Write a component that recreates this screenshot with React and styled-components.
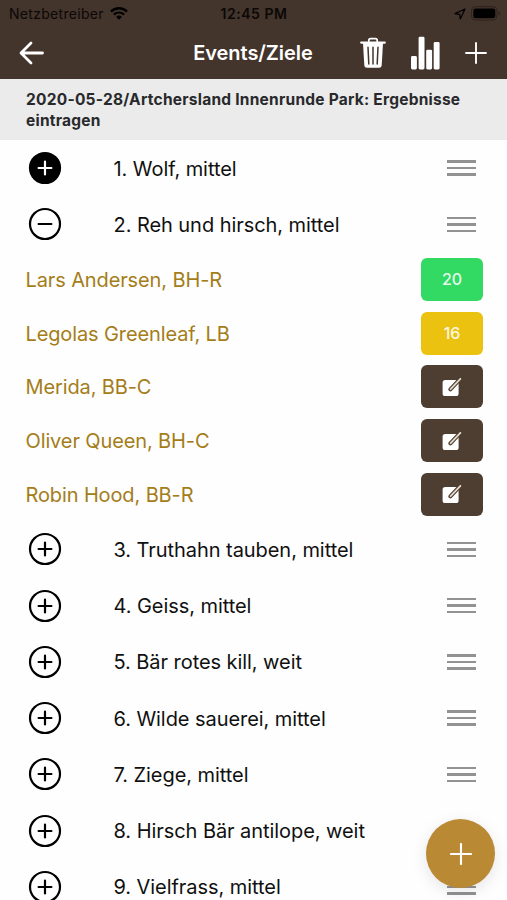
import React from "react";
import styled, { createGlobalStyle } from "styled-components";

const targets = [
  { name: "1. Wolf, mittel", state: "done" },
  { name: "2. Reh und hirsch, mittel", state: "open" },
  { name: "3. Truthahn tauben, mittel" },
  { name: "4. Geiss, mittel" },
  { name: "5. Bär rotes kill, weit" },
  { name: "6. Wilde sauerei, mittel" },
  { name: "7. Ziege, mittel" },
  { name: "8. Hirsch Bär antilope, weit" },
  { name: "9. Vielfrass, mittel" },
];

const archers = [
  { name: "Lars Andersen, BH-R", score: 20, color: "#32da64" },
  { name: "Legolas Greenleaf, LB", score: 16, color: "#ecc210" },
  { name: "Merida, BB-C" },
  { name: "Oliver Queen, BH-C" },
  { name: "Robin Hood, BB-R" },
];

function WifiIcon() {
  return (
    <svg width="18" height="13" viewBox="0 0 18 13" fill="none" stroke="#000">
      <path d="M1 4.6a11.4 11.4 0 0 1 16 0" strokeWidth="2.4" />
      <path d="M3.9 7.6a7.3 7.3 0 0 1 10.2 0" strokeWidth="2.2" />
      <path d="M9 12.7 6.2 9.9a4 4 0 0 1 5.6 0z" fill="#000" stroke="none" />
    </svg>
  );
}

function LocationIcon() {
  return (
    <svg width="12" height="12" viewBox="0 0 12 12" fill="none" stroke="#000" strokeWidth="1.2" strokeLinejoin="round">
      <path d="M11 1 1 5.6l4.7.7.6 4.7z" />
    </svg>
  );
}

function BatteryIcon() {
  return (
    <svg width="30" height="15" viewBox="0 0 30 15">
      <rect x="0.5" y="0.7" width="25.5" height="13.4" rx="4" fill="none" stroke="#2d221c" strokeWidth="1" />
      <rect x="2.3" y="2.5" width="22" height="9.8" rx="2.3" fill="#000" />
      <path d="M27.5 5.3q3 2 0 4.2z" fill="#2d221c" />
    </svg>
  );
}

function BackIcon() {
  return (
    <svg width="26" height="24" viewBox="0 0 26 24" fill="none" stroke="#fff" strokeWidth="2.8" strokeLinecap="round" strokeLinejoin="round">
      <path d="M12 2 2 12l10 10M2.5 12h21" />
    </svg>
  );
}

function TrashIcon() {
  return (
    <svg width="26" height="32" viewBox="0 0 26 32" fill="none">
      <path d="M8.8 5V3.4q0-1.8 1.8-1.8h4.8q1.8 0 1.8 1.8V5" stroke="#fff" strokeWidth="1.7" />
      <path d="M1.2 5.6h23.6" stroke="#fff" strokeWidth="2.2" strokeLinecap="round" />
      <path d="M3 6h20l-1.3 22.2q-.2 2.6-2.7 2.6H7q-2.5 0-2.7-2.6z" fill="#fff" />
      <path d="m8 10.3.8 16.7M13 10.3V27M18 10.3 17.2 27" stroke="#43342c" strokeWidth="1.5" strokeLinecap="round" />
    </svg>
  );
}

function StatsIcon() {
  return (
    <svg width="29" height="34" viewBox="0 0 29 34" fill="#fff">
      <rect x="0" y="20" width="5.9" height="13.5" rx="1.4" />
      <rect x="7.6" y="0.7" width="5.9" height="32.8" rx="1.4" />
      <rect x="15.2" y="13.7" width="5.9" height="19.8" rx="1.4" />
      <rect x="22.7" y="6" width="5.9" height="27.5" rx="1.4" />
    </svg>
  );
}

function PlusIcon({ weight = 1.9 }) {
  return (
    <svg width="22" height="22" viewBox="0 0 22 22" stroke="#fff" strokeWidth={weight} strokeLinecap="round">
      <path d="M11 1v20M1 11h20" />
    </svg>
  );
}

function ToggleIcon({ state }) {
  const done = state === "done";
  return (
    <svg width="34" height="34" viewBox="0 0 34 34" fill="none" strokeWidth="2.2" strokeLinecap="round">
      <circle cx="17" cy="17" r="15" fill={done ? "#000" : "none"} stroke="#000" />
      <path d={state === "open" ? "M10.6 17h12.8" : "M17 10.6v12.8M10.6 17h12.8"} stroke={done ? "#fff" : "#000"} />
    </svg>
  );
}

function EditIcon() {
  return (
    <svg width="20" height="20" viewBox="0 0 20 20" fill="none">
      <rect x="0.6" y="3" width="16" height="16" rx="2.6" fill="#fff" />
      <path d="m8.4 12.4 9.6-10.2" stroke="#4e3d31" strokeWidth="4" strokeLinecap="round" />
      <path d="m8.6 12.2 9.8-10.4" stroke="#e2d8c8" strokeWidth="1.8" strokeLinecap="round" />
    </svg>
  );
}

function TargetRow({ target }) {
  return (
    <Row>
      <Toggle aria-label={target.name}>
        <ToggleIcon state={target.state} />
      </Toggle>
      <TargetName>{target.name}</TargetName>
      <DragHandle>
        <span />
        <span />
        <span />
      </DragHandle>
    </Row>
  );
}

function App() {
  return (
    <Screen>
      <GlobalStyle />
      <Header>
        <StatusBar>
          <Carrier>
            Netzbetreiber <WifiIcon />
          </Carrier>
          <Clock>12:45 PM</Clock>
          <StatusIcons>
            <LocationIcon />
            <BatteryIcon />
          </StatusIcons>
        </StatusBar>
        <Toolbar>
          <BarButton aria-label="Zurück">
            <BackIcon />
          </BarButton>
          <Title>Events/Ziele</Title>
          <Actions>
            <BarButton aria-label="Löschen">
              <TrashIcon />
            </BarButton>
            <BarButton aria-label="Statistik">
              <StatsIcon />
            </BarButton>
            <BarButton aria-label="Neu">
              <PlusIcon />
            </BarButton>
          </Actions>
        </Toolbar>
      </Header>
      <EventInfo>2020-05-28/Artchersland Innenrunde Park: Ergebnisse eintragen</EventInfo>
      <List>
        {targets.map((target) => (
          <React.Fragment key={target.name}>
            <TargetRow target={target} />
            {target.state === "open" &&
              archers.map((archer) => (
                <ArcherRow key={archer.name}>
                  <ArcherName>{archer.name}</ArcherName>
                  <ScoreButton $color={archer.color}>{archer.score || <EditIcon />}</ScoreButton>
                </ArcherRow>
              ))}
          </React.Fragment>
        ))}
      </List>
      <Fab aria-label="Ziel hinzufügen">
        <PlusIcon weight={2.1} />
      </Fab>
    </Screen>
  );
}
export default App;

const GlobalStyle = createGlobalStyle`
  body {
    margin: 0;
    background: #fff;
    font-family: Inter, "Liberation Sans", sans-serif;
  }

  * {
    box-sizing: border-box;
  }

  button {
    padding: 0;
    border: 0;
    background: none;
    font-family: inherit;
  }

  svg {
    display: block;
    flex-shrink: 0;
  }
`;

const Screen = styled.div`
  position: relative;
  display: flex;
  flex-direction: column;
  height: 900px;
  overflow: hidden;
  background: #fefefe;
`;

const Header = styled.header`
  height: 79px;
  flex-shrink: 0;
  background: #43342c;
`;

const StatusBar = styled.div`
  display: grid;
  grid-template-columns: 1fr auto 1fr;
  align-items: center;
  height: 27px;
  padding: 0 6px 0 9px;
  color: #0b0806;
`;

const Carrier = styled.div`
  display: flex;
  align-items: center;
  gap: 6px;
  font-size: 14px;
  letter-spacing: 0.3px;
`;

const Clock = styled.div`
  margin-right: 2px;
  font-size: 14px;
  font-weight: 600;
  letter-spacing: 0.55px;
`;

const StatusIcons = styled.div`
  display: flex;
  align-items: center;
  justify-content: flex-end;
  gap: 5px;
`;

const Toolbar = styled.div`
  display: grid;
  grid-template-columns: 1fr auto 1fr;
  align-items: center;
  height: 51px;
  padding: 0 20px 0 19px;
`;

const BarButton = styled.button`
  display: flex;
  align-items: center;
`;

const Title = styled.h1`
  margin: 0;
  color: #fff;
  font-size: 20px;
  font-weight: 600;
  letter-spacing: -0.05px;
`;

const Actions = styled.div`
  display: flex;
  align-items: center;
  justify-content: flex-end;
  gap: 25px;
`;

const EventInfo = styled.div`
  height: 61px;
  flex-shrink: 0;
  padding: 9.5px 26px;
  background: #ebebeb;
  color: #29292b;
  font-size: 15.5px;
  font-weight: 700;
  letter-spacing: 0.24px;
  line-height: 21px;
`;

const List = styled.main`
  flex-shrink: 0;
`;

const Row = styled.div`
  display: flex;
  align-items: center;
  height: 56.25px;
  padding: 0 31.5px 0 28px;
`;

const Toggle = styled.button`
  width: 85.5px;
`;

const TargetName = styled.div`
  flex: 1;
  padding-top: 1px;
  color: #101010;
  font-size: 20px;
  letter-spacing: -0.06px;
`;

const DragHandle = styled.div`
  display: flex;
  flex-direction: column;
  gap: 4.1px;
  width: 28.5px;

  span {
    height: 2.4px;
    background: #929292;
  }
`;

const ArcherRow = styled.div`
  display: flex;
  align-items: center;
  justify-content: space-between;
  height: 53.75px;
  padding: 0 24px 0 25.5px;
`;

const ArcherName = styled.div`
  padding-top: 1px;
  color: #a47d19;
  font-size: 20px;
  letter-spacing: -0.12px;
`;

const ScoreButton = styled.button`
  display: flex;
  align-items: center;
  justify-content: center;
  width: 62px;
  height: 43px;
  border-radius: 6px;
  background: ${(props) => props.$color || "#4e3d31"};
  color: rgba(255, 255, 255, 0.9);
  font-size: 16px;
  font-weight: 500;
`;

const Fab = styled.button`
  position: absolute;
  right: 12px;
  bottom: 12px;
  display: flex;
  align-items: center;
  justify-content: center;
  width: 69px;
  height: 69px;
  border-radius: 50%;
  background: #ba8934;
  box-shadow: 0 4px 16px rgba(0, 0, 0, 0.1);
`;
